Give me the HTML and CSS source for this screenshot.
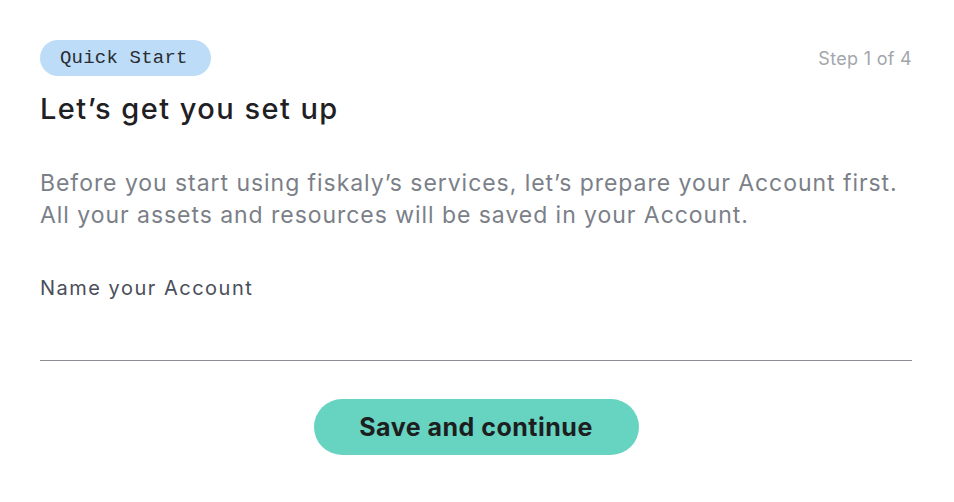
FILE: index.html
```html
<!DOCTYPE html>
<html lang="en">
<head>
<meta charset="utf-8">
<title>Quick Start</title>
<link rel="stylesheet" href="styles.css">
</head>
<body>
<main class="card">
  <div class="top-row">
    <span class="badge">Quick Start</span>
    <span class="step">Step 1 of 4</span>
  </div>
  <h1 class="title">Let’s get you set up</h1>
  <p class="intro">Before you start using fiskaly’s services, let’s prepare your Account first.<br>All your assets and resources will be saved in your Account.</p>
  <label class="field">
    <span class="field-label">Name your Account</span>
    <input class="field-input" type="text">
  </label>
  <div class="actions">
    <button class="primary" type="button">Save and continue</button>
  </div>
</main>
</body>
</html>
```

FILE: styles.css
```css
* { box-sizing: border-box; }
html, body { margin: 0; padding: 0; background: #ffffff; }
body {
  font-family: "Inter", "Noto Sans", sans-serif;
  color: #1f2024;
}
.card {
  width: 954px;
  padding: 40px 42px 0 40px;
  display: flex;
  flex-direction: column;
}
.top-row {
  display: flex;
  justify-content: space-between;
  align-items: center;
  height: 36px;
}
.badge {
  display: inline-flex;
  align-items: center;
  height: 36px;
  padding: 0 23px 0 20px;
  border-radius: 18px;
  background: #bcdcf8;
  color: #2a2d33;
  font-family: "Liberation Mono", "DejaVu Sans Mono", monospace;
  font-size: 19px;
  letter-spacing: 0.2px;
}
.step {
  font-size: 18px;
  color: #a3a6ad;
  letter-spacing: 0.3px;
}
.title {
  margin: 15px 0 0;
  font-size: 29px;
  font-weight: 500;
  line-height: 36px;
  color: #1f2024;
  letter-spacing: 1.45px;
}
.intro {
  margin: 40px 0 0;
  font-size: 23px;
  line-height: 32px;
  color: #7b7f88;
  letter-spacing: 0.95px;
}
.field {
  display: flex;
  flex-direction: column;
  margin-top: 44px;
}
.field-label {
  font-size: 20px;
  line-height: 26px;
  color: #4a4e5a;
  letter-spacing: 1.5px;
}
.field-input {
  margin-top: 14px;
  height: 46px;
  border: 0;
  border-bottom: 1.5px solid #8b8e95;
  outline: none;
  background: transparent;
  font: inherit;
}
.actions {
  display: flex;
  justify-content: center;
  margin-top: 38px;
}
.primary {
  width: 325px;
  height: 56px;
  border: 0;
  border-radius: 28px;
  background: #67d3c1;
  color: #1d1e20;
  font-family: "Inter", "Noto Sans", sans-serif;
  font-size: 25px;
  font-weight: 700;
  letter-spacing: 0.5px;
  cursor: pointer;
}
```
